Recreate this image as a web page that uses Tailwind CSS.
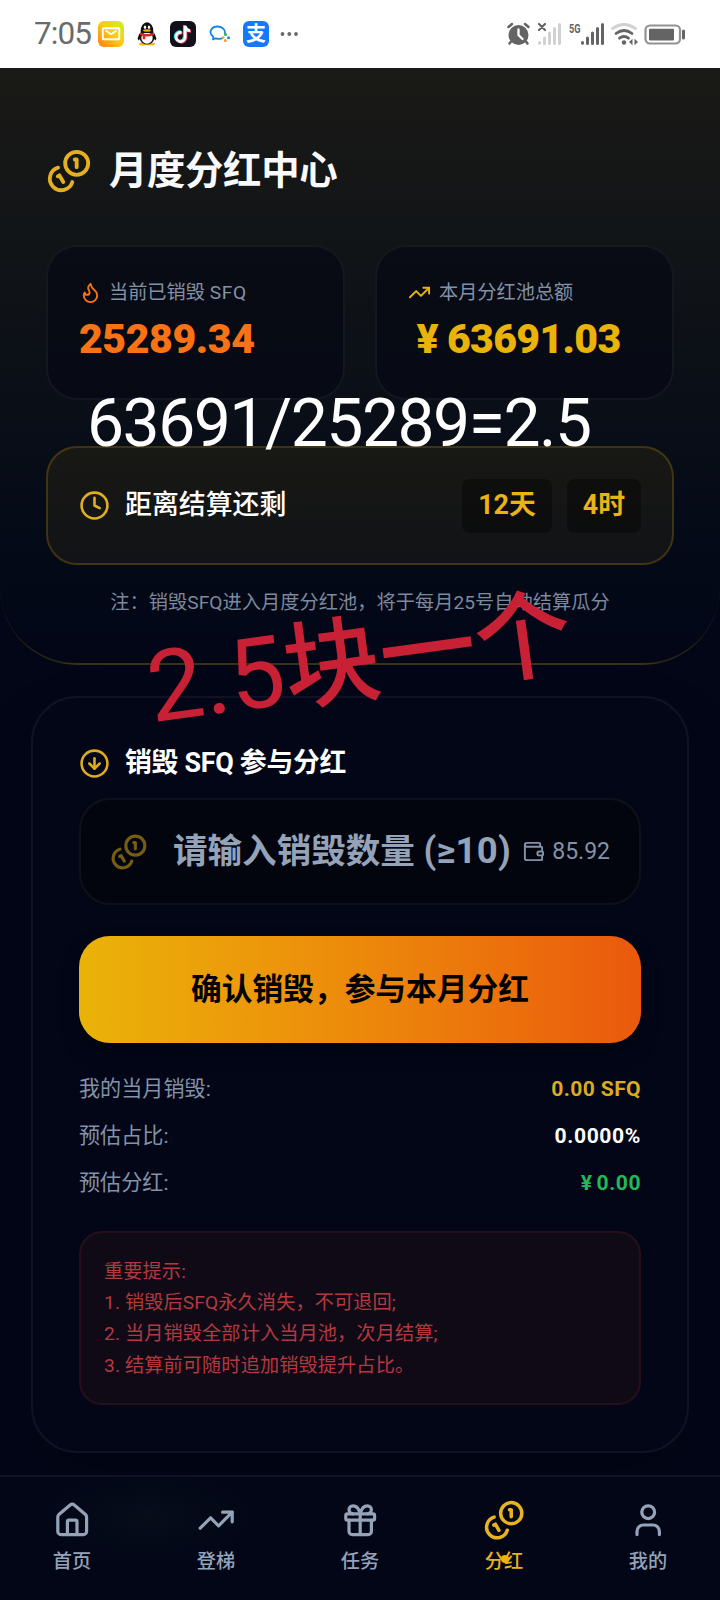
<!DOCTYPE html>
<html lang="zh-CN">
<head>
<meta charset="utf-8">
<title>月度分红中心</title>
<script src="https://cdn.jsdelivr.net/npm/@tailwindcss/browser@4"></script>
</head>
<body class="bg-[#020617]">
<svg class="hidden">
  <symbol id="coins" viewBox="0 0 24 24"><g fill="none" stroke="currentColor" stroke-width="2" stroke-linecap="round" stroke-linejoin="round"><path d="M13.744 17.736a6 6 0 1 1-7.48-7.48"/><path d="M15 6h1v4"/><path d="m6.134 14.768.866-.5 2 3.464"/><circle cx="16" cy="8" r="6"/></g></symbol>
  <symbol id="trend" viewBox="0 0 24 24"><g fill="none" stroke="currentColor" stroke-width="2" stroke-linecap="round" stroke-linejoin="round"><path d="M16 7h6v6"/><path d="m22 7-8.5 8.5-5-5L2 17"/></g></symbol>
</svg>
<div class="relative flex h-[1600px] w-[720px] flex-col overflow-hidden bg-[#020617] font-['Roboto','Noto_Sans_CJK_SC',sans-serif] text-white">

  <!-- Phone status bar -->
  <div class="flex h-[68px] shrink-0 items-center justify-between bg-white pr-[34px] pl-[34px] text-[#6a6a6a]">
    <div class="flex items-center">
      <span class="w-[64px] text-[31.500px] leading-[68px] tracking-[-0.900px]">7:05</span>
      <svg class="h-[26px] w-[26px]" viewBox="0 0 26 26"><defs><linearGradient id="mail" x1="0" y1="1" x2="1" y2="0"><stop offset="0" stop-color="#ff7a12"/><stop offset=".5" stop-color="#ffc815"/><stop offset="1" stop-color="#c6f51a"/></linearGradient></defs><rect width="26" height="26" rx="6" fill="url(#mail)"/><rect x="4.8" y="7.3" width="16.5" height="11" rx=".6" fill="none" stroke="#fff" stroke-width="1.9"/><path d="M7.5 9.5 13 13.2l5.700-3.700" fill="none" stroke="#fff" stroke-width="1.600"/></svg>
      <svg class="ml-[13px] h-[24px] w-[20px]" viewBox="0 0 20 24"><path d="M2.500 11 0.600 16.500l.8 2L4 16zM17.500 11l1.900 5.500-.8 2L16 16z" fill="#111"/><ellipse cx="6" cy="22" rx="4" ry="1.500" fill="#f6b616"/><ellipse cx="14" cy="22" rx="4" ry="1.500" fill="#f6b616"/><ellipse cx="10" cy="15.500" rx="7.500" ry="7" fill="#111"/><ellipse cx="10" cy="16" rx="5.700" ry="5.800" fill="#fff"/><path d="M3.700 9a6.300 8.700 0 1 1 12.600 0v2H3.700z" fill="#111"/><ellipse cx="8" cy="5.300" rx="1.200" ry="1.700" fill="#fff"/><ellipse cx="12" cy="5.300" rx="1.200" ry="1.700" fill="#fff"/><ellipse cx="10" cy="8.500" rx="3.900" ry="1.200" fill="#f6a916"/><path d="M3 10.500q7 3.200 14 0v2.600q-4 1.900-8.700 1.400v2.800H5.700v-3.400L3 12.800z" fill="#dd2626"/></svg>
      <svg class="ml-[13px] h-[26px] w-[26px]" viewBox="0 0 26 26"><rect width="26" height="26" rx="6" fill="#12101a"/><g fill="none" stroke-width="2.700"><path d="M11.600 11.500a4.600 4.600 0 1 0 3.600 4.500V5c.5 3 2.500 4.600 5 4.700" stroke="#25ddd8" transform="translate(-.9 -.7)"/><path d="M11.600 11.500a4.600 4.600 0 1 0 3.600 4.500V5c.5 3 2.500 4.600 5 4.700" stroke="#f23b5d" transform="translate(.8 .7)"/><path d="M11.600 11.500a4.600 4.600 0 1 0 3.600 4.500V5c.5 3 2.500 4.600 5 4.700" stroke="#fff"/></g></svg>
      <svg class="ml-[13px] h-[18px] w-[22px]" viewBox="0 0 22 18"><path d="M14.500 12.400c-2.200 1.500-5.300 1.700-7.800.9L4 14.500l.4-2.500C-1.400 7.500 2.400 1.500 8.500 1.500c4.700 0 8 3.500 7.500 7" fill="none" stroke="#1587e2" stroke-width="1.800" stroke-linecap="round" stroke-linejoin="round"/><circle cx="16.500" cy="9.500" r="1.500" fill="#2eb84b"/><circle cx="19.500" cy="12.800" r="1.500" fill="#1c84e8"/><circle cx="16.300" cy="15.500" r="1.500" fill="#f49c35"/><circle cx="14" cy="12.700" r="1.200" fill="#e9b33e"/></svg>
      <span class="ml-[12px] flex h-[26px] w-[26px] items-center justify-center rounded-[6px] bg-[#1677ff] text-[20px] leading-none font-bold text-white">支</span>
      <svg class="ml-[11px] h-[6px] w-[20px] fill-current" viewBox="0 0 20 6"><circle cx="2.500" cy="3" r="1.900"/><circle cx="9.300" cy="3" r="1.900"/><circle cx="16" cy="3" r="1.900"/></svg>
    </div>
    <svg class="h-[32px] w-[180px] overflow-visible" viewBox="506 18 180 32">
      <g fill="#646464" stroke="#646464" stroke-linecap="round">
        <circle cx="518.500" cy="35" r="10" stroke="none"/><path d="m508.500 27 3.500-3M528.500 27l-3.500-3M511 41.500l-1.500 2M526 41.500l1.500 2" stroke-width="2.500" fill="none"/>
        <path d="M518.500 29.500V35l4 4" stroke="#fff" stroke-width="2.300" fill="none"/>
        <path d="m539 24 6 6M545 24l-6 6" stroke-width="2.200" fill="none"/>
        <g stroke="#d1d1d1" stroke-width="3"><path d="M539.500 42.500v.800M544.500 38v5.500M549.500 33v10.500M554.500 28.500v15M559.500 24.500v19"/></g>
        <g stroke-width="3"><path d="M582.500 42.500v.800M587.500 38v5.500M592.500 33v10.500M597.500 28.500v15M602.500 24.500v19"/></g>
        <path d="M612.500 28.500q11.500-8 23 0" stroke="#d1d1d1" stroke-width="2.800" fill="none"/>
        <path d="M616 33.500q8-6 16 0M619.500 38.200q4.500-3.500 9 0" stroke-width="2.800" fill="none"/><circle cx="624" cy="42.500" r="2.200" stroke="none"/>
        <path d="m629 42 3.500-3.200v6.400zM638 42l-3.500-3.200v6.400z" stroke="none"/>
        <rect x="645.500" y="25.500" width="34.500" height="18" rx="4.500" fill="none" stroke="#929292" stroke-width="2.200"/><rect x="649" y="28.800" width="25" height="11.800" rx="1" stroke="none"/><path d="M683.500 31v7" stroke-width="3"/>
      </g>
      <text x="569" y="32.800" font-size="13.500" font-weight="700" fill="#646464" textLength="11.500" lengthAdjust="spacingAndGlyphs">5G</text>
    </svg>
  </div>

  <!-- Header -->
  <header class="flex h-[597px] shrink-0 flex-col rounded-b-[77px] border-b-2 border-[#eab308]/15 bg-linear-to-b from-[#1a1a16] to-[#020617] px-[46px] pt-[80px]">
    <div class="flex h-[46px] items-center gap-[17px]">
      <svg class="h-[46px] w-[46px] text-[#e4b020]"><use href="#coins"/></svg>
      <h1 class="text-[38.400px] leading-[46px] font-bold tracking-[-0.350px] text-[#fafafc]">月度分红中心</h1>
    </div>
    <div class="mt-[51px] grid grid-cols-2 gap-[30px]">
      <div class="h-[155px] rounded-[31px] border-2 border-white/5 bg-[#050914]/70 px-[31px] pt-[31px]">
        <div class="flex h-[29px] items-center gap-[7px] text-[19.200px] leading-[29px] text-[#8391a6]">
          <svg class="h-[23px] w-[23px] text-[#f97316]" viewBox="0 0 24 24" fill="none" stroke="currentColor" stroke-width="2" stroke-linecap="round" stroke-linejoin="round"><path d="M8.500 14.500A2.500 2.500 0 0 0 11 12c0-1.380-.5-2-1-3-1.072-2.143-.224-4.054 2-6 .5 2.500 2 4.900 4 6.500 2 1.600 3 3.500 3 5.500a7 7 0 1 1-14 0c0-1.153.433-2.294 1-3a2.500 2.500 0 0 0 2.500 2.500z"/></svg>
          <span>当前已销毁 <span class="tracking-[0.7px]">SFQ</span></span>
        </div>
        <div class="mt-[5px] text-[41px] leading-[54px] font-black tracking-[-0.4px] text-[#f97316]">25289.34</div>
      </div>
      <div class="h-[155px] rounded-[31px] border-2 border-white/5 bg-[#050914]/70 px-[31px] pt-[31px]">
        <div class="flex h-[29px] items-center gap-[8px] text-[19.200px] leading-[29px] text-[#8391a6]">
          <svg class="h-[23px] w-[23px] text-[#eab308]"><use href="#trend"/></svg>
          <span>本月分红池总额</span>
        </div>
        <div class="mt-[5px] flex text-[41px] leading-[54px] font-black text-[#eab308]"><span class="w-[39px] text-center">¥</span><span class="tracking-[-0.650px]">63691.03</span></div>
      </div>
    </div>
    <div class="mt-[46px] flex h-[119px] shrink-0 items-center rounded-[31px] border-2 border-[#eab308]/20 bg-linear-to-b from-[#181814] to-[#111316] px-[31px]">
      <svg class="h-[31px] w-[31px] text-[#e2af22]" viewBox="0 0 24 24" fill="none" stroke="currentColor" stroke-width="2" stroke-linecap="round" stroke-linejoin="round"><circle cx="12" cy="12" r="10"/><path d="M12 6v6l4 2"/></svg>
      <span class="-mt-[2px] ml-[15px] flex-1 text-[26.880px] leading-[38px] font-medium">距离结算还剩</span>
      <div class="flex gap-[15px] text-[26.880px] leading-[53px] font-bold text-[#eab316]">
        <span class="h-[54px] w-[90px] rounded-[8px] bg-black/35 text-center">12天</span>
        <span class="h-[54px] w-[74px] rounded-[8px] bg-black/35 text-center">4时</span>
      </div>
    </div>
    <p class="mt-[23px] text-center text-[19.200px] leading-[29px] tracking-[0.050px] text-[#7c899e]">注：销毁SFQ进入月度分红池，将于每月25号自动结算瓜分</p>
  </header>

  <!-- Burn form -->
  <main class="mx-[31px] mt-[31px] flex h-[757px] shrink-0 flex-col rounded-[46px] border-2 border-white/5 px-[46px] pt-[46px] shadow-[0_30px_60px_rgba(0,0,0,0.2)]">
    <div class="flex h-[38px] items-center gap-[15px]">
      <svg class="h-[31px] w-[31px] text-[#deac20]" viewBox="0 0 24 24" fill="none" stroke="currentColor" stroke-width="2" stroke-linecap="round" stroke-linejoin="round"><circle cx="12" cy="12" r="10"/><path d="M12 8v8"/><path d="m8 12 4 4 4-4"/></svg>
      <h2 class="text-[26.880px] leading-[38px] font-bold tracking-[-0.3px]">销毁 SFQ 参与分红</h2>
    </div>
    <div class="mt-[16px] flex h-[107px] shrink-0 items-center rounded-[31px] border-2 border-white/5 bg-[#02040e] pr-[29px] pl-[29px]">
      <svg class="h-[38px] w-[38px] text-[#775d12]"><use href="#coins"/></svg>
      <span class="-mt-[2px] ml-[25px] text-[34.560px] leading-[50px] font-bold whitespace-nowrap text-[#94a3b8]">请输入销毁数量 <span class="tracking-[0.300px] text-[36.500px]">(≥10)</span></span>
      <span class="ml-auto flex items-center gap-[7px] text-[23px] leading-[31px] text-[#8492a7]">
        <svg class="h-[23px] w-[23px]" viewBox="0 0 24 24" fill="none" stroke="currentColor" stroke-width="2" stroke-linecap="round" stroke-linejoin="round"><path d="M19 7V4a1 1 0 0 0-1-1H5a2 2 0 0 0 0 4h15a1 1 0 0 1 1 1v4h-3a2 2 0 0 0 0 4h3a1 1 0 0 0 1-1v-2a1 1 0 0 0-1-1"/><path d="M3 5v14a2 2 0 0 0 2 2h15a1 1 0 0 0 1-1v-4"/></svg>
        85.92
      </span>
    </div>
    <button class="mt-[31px] h-[107px] shrink-0 rounded-[31px] bg-linear-to-r from-[#eab308] to-[#ea580c] text-[30.720px] leading-[46px] font-bold text-black shadow-[0_10px_20px_rgba(0,0,0,0.3)]">确认销毁，参与本月分红</button>
    <dl class="mt-[30px] text-[21.120px] leading-[32px] text-[#8492a7]">
      <div class="flex h-[47px] justify-between"><dt>我的当月销毁:</dt><dd class="font-bold tracking-[0.350px] text-[#dcab21]">0.00 SFQ</dd></div>
      <div class="flex h-[47px] justify-between"><dt>预估占比:</dt><dd class="font-bold tracking-[0.600px] text-white">0.0000%</dd></div>
      <div class="flex h-[47px] justify-between"><dt>预估分红:</dt><dd class="flex gap-[4px] font-bold tracking-[0.500px] text-[#22b857]"><span>¥</span><span>0.00</span></dd></div>
    </dl>
    <div class="mt-[17px] h-[174px] rounded-[23px] border-2 border-[#ef4444]/10 bg-[#100a17] px-[23px] pt-[23px] text-[19.200px] leading-[31.200px] tracking-[0.100px] text-[#b3393f]">
      <p>重要提示:</p>
      <p>1. 销毁后SFQ永久消失，不可退回;</p>
      <p>2. 当月销毁全部计入当月池，次月结算;</p>
      <p>3. 结算前可随时追加销毁提升占比。</p>
    </div>
  </main>

  <!-- Tab bar -->
  <nav class="relative mt-[22px] grid h-[125px] shrink-0 grid-cols-5 border-t-2 border-white/5 bg-[#020617] bg-[radial-gradient(ellipse_110px_50px_at_148px_40px,#070d19,#020617)] pt-[24px] text-[19.200px] leading-[29px] font-medium text-[#94a3b8]">
    <div class="flex flex-col items-center gap-[8px]">
      <svg class="h-[38.400px] w-[38.400px]" viewBox="0 0 24 24" fill="none" stroke="currentColor" stroke-width="2" stroke-linecap="round" stroke-linejoin="round"><path d="M15 21v-8a1 1 0 0 0-1-1h-4a1 1 0 0 0-1 1v8"/><path d="M3 10a2 2 0 0 1 .709-1.528l7-5.999a2 2 0 0 1 2.582 0l7 5.999A2 2 0 0 1 21 10v9a2 2 0 0 1-2 2H5a2 2 0 0 1-2-2z"/></svg>
      <span>首页</span>
    </div>
    <div class="flex flex-col items-center gap-[8px]">
      <svg class="h-[38.400px] w-[38.400px]"><use href="#trend"/></svg>
      <span>登梯</span>
    </div>
    <div class="flex flex-col items-center gap-[8px]">
      <svg class="h-[38.400px] w-[38.400px]" viewBox="0 0 24 24" fill="none" stroke="currentColor" stroke-width="2" stroke-linecap="round" stroke-linejoin="round"><rect x="3" y="8" width="18" height="4" rx="1"/><path d="M12 8v13"/><path d="M19 12v7a2 2 0 0 1-2 2H7a2 2 0 0 1-2-2v-7"/><path d="M7.500 8a2.500 2.500 0 0 1 0-5A4.800 8 0 0 1 12 8a4.800 8 0 0 1 4.500-5 2.500 2.500 0 0 1 0 5"/></svg>
      <span>任务</span>
    </div>
    <div class="relative flex flex-col items-center gap-[8px] text-[#e8b31e]">
      <svg class="h-[38.400px] w-[38.400px] scale-110"><use href="#coins"/></svg>
      <span>分红</span>
      <i class="absolute top-[54px] left-[69px] h-[8px] w-[8px] rounded-full bg-[#eab308]"></i>
    </div>
    <div class="flex flex-col items-center gap-[8px]">
      <svg class="h-[38.400px] w-[38.400px]" viewBox="0 0 24 24" fill="none" stroke="currentColor" stroke-width="2" stroke-linecap="round" stroke-linejoin="round"><path d="M19 21v-2a4 4 0 0 0-4-4H9a4 4 0 0 0-4 4v2"/><circle cx="12" cy="7" r="4"/></svg>
      <span>我的</span>
    </div>
  </nav>

  <!-- Annotations over the page -->
  <div class="absolute top-[386px] left-[87px] text-[66px] leading-[76px] tracking-[-1.500px] whitespace-nowrap">63691/25289=2.5</div>
  <div class="absolute top-[600px] left-[146px] origin-center -rotate-[7.700deg] text-[96.500px] leading-[120px] font-medium whitespace-nowrap text-[#c82034]"><span class="text-[99px] font-normal">2.5</span>块一个</div>
</div>
</body>
</html>
